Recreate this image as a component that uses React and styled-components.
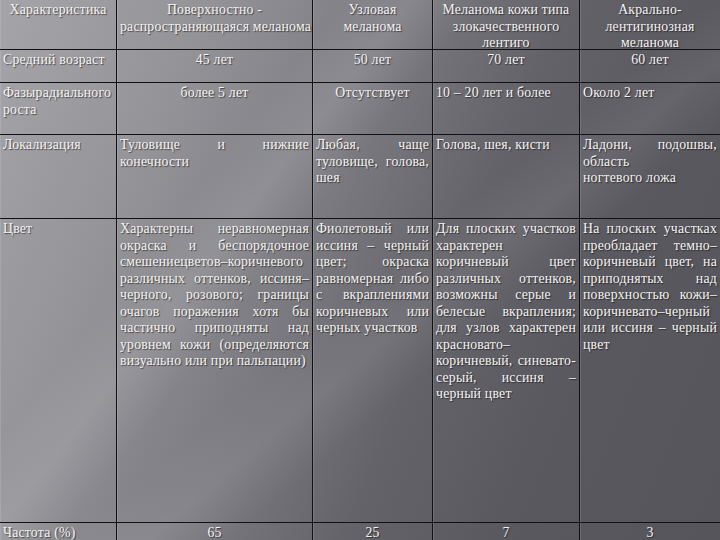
import React from "react"
import styled, { createGlobalStyle } from "styled-components"

const Global = createGlobalStyle`
body {
  margin: 0;
  background: #5a5960;
}
`

const Slide = styled.div`
width: 720px;
height: 540px;
overflow: hidden;
position: relative;
background:
  linear-gradient(128deg, transparent 30%, rgba(255,255,255,0.10) 36%, transparent 42%),
  linear-gradient(140deg, transparent 52%, rgba(255,255,255,0.07) 58%, transparent 64%),
  linear-gradient(112deg, #a4a4a9 0%, #939398 22%, #7c7c82 42%, #64636a 60%, #59585f 78%, #56555c 100%);
font-family: "Liberation Serif", "Times New Roman", serif;
`

const Table = styled.div`
display: grid;
grid-template-columns: 117px 196px 120px 147px 140px;
grid-template-rows: 50px 33px 52px 84px 304px 40px;
`

const Cell = styled.div`
box-sizing: border-box;
border-right: ${p => (p.$last ? "none" : "1.5px solid #111")};
border-bottom: 1.5px solid #111;
box-shadow: inset 1px 0 0 rgba(255,255,255,0.12);
padding: 2px 3px 0 3px;
color: #f4f4f4;
font-size: 13.8px;
letter-spacing: 0.2px;
line-height: 16.5px;
text-align: ${p => (p.$align === "center" ? "center" : "left")};
text-shadow: 1px 1px 1px rgba(0,0,0,0.55);
`

const Line = styled.span`
display: block;
white-space: nowrap;
text-align: ${p => (p.$fill ? "justify" : "inherit")};
text-align-last: ${p => (p.$fill ? "justify" : "auto")};
`

const rows = [
  [
    ["c", ["Характеристика"]],
    ["c", ["Поверхностно -", "распространяющаяся меланома"]],
    ["c", ["Узловая", "меланома"]],
    ["c", ["Меланома кожи типа", "злокачественного", "лентиго"]],
    ["c", ["Акрально-", "лентигинозная", "меланома"]],
  ],
  [
    ["l", ["Средний возраст"]],
    ["c", ["45 лет"]],
    ["c", ["50 лет"]],
    ["c", ["70 лет"]],
    ["c", ["60 лет"]],
  ],
  [
    ["l", ["Фазырадиального", "роста"]],
    ["c", ["более 5 лет"]],
    ["c", ["Отсутствует"]],
    ["l", ["10 – 20 лет и более"]],
    ["l", ["Около 2 лет"]],
  ],
  [
    ["l", ["Локализация"]],
    ["j", ["Туловище и нижние", "конечности"]],
    ["j", ["Любая, чаще", "туловище, голова,", "шея"]],
    ["l", ["Голова, шея, кисти"]],
    ["j", ["Ладони, подошвы,", "область", "ногтевого ложа"]],
  ],
  [
    ["l", ["Цвет"]],
    ["j", [
      "Характерны неравномерная",
      "окраска и беспорядочное",
      "смешениецветов–коричневого",
      "различных оттенков, иссиня–",
      "черного, розового; границы",
      "очагов поражения хотя бы",
      "частично приподняты над",
      "уровнем кожи (определяются",
      "визуально или при пальпации)",
    ]],
    ["j", [
      "Фиолетовый или",
      "иссиня – черный",
      "цвет; окраска",
      "равномерная либо",
      "с вкраплениями",
      "коричневых или",
      "черных участков",
    ]],
    ["j", [
      "Для плоских участков",
      "характерен",
      "коричневый цвет",
      "различных оттенков,",
      "возможны серые и",
      "белесые вкрапления;",
      "для узлов характерен",
      "красновато–",
      "коричневый, синевато-",
      "серый, иссиня –",
      "черный цвет",
    ]],
    ["j", [
      "На плоских участках",
      "преобладает темно–",
      "коричневый цвет, на",
      "приподнятых над",
      "поверхностью кожи–",
      "коричневато–черный",
      "или иссиня – черный",
      "цвет",
    ]],
  ],
  [
    ["l", ["Частота (%)"]],
    ["c", ["65"]],
    ["c", ["25"]],
    ["c", ["7"]],
    ["c", ["3"]],
  ],
]

const alignOf = { c: "center", l: "left", j: "justify" }

export default function App() {
  return (
    <Slide>
      <Global />
      <Table>
        {rows.map((r, ri) =>
          r.map(([a, lines], ci) => (
            <Cell key={ri + "-" + ci} $align={alignOf[a]} $last={ci === 4}>
              {lines.map((s, li) => (
                <Line key={li} $fill={a === "j" && li < lines.length - 1 && s.includes(" ")}>
                  {s}
                </Line>
              ))}
            </Cell>
          ))
        )}
      </Table>
    </Slide>
  )
}
